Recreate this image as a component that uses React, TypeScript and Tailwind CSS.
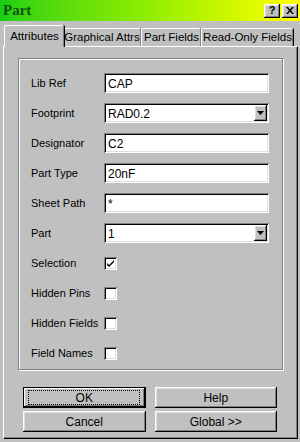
import React from "react";

const raised =
  "shadow-[inset_-1px_-1px_#000,inset_1px_1px_#fff,inset_-2px_-2px_#808080,inset_2px_2px_#dfdfdf]";
const sunken =
  "shadow-[inset_1px_1px_#808080,inset_-1px_-1px_#fff,inset_2px_2px_#000,inset_-2px_-2px_#dfdfdf]";

function TextRow({ label, value, combo }: { label: string; value: string; combo?: boolean }) {
  return (
    <div className="flex h-[30px] items-center">
      <div className="w-[73px] whitespace-nowrap">{label}</div>
      <div className={`relative flex h-[20px] w-[165px] items-center bg-white pl-[4px] pt-[1px] ${sunken}`}>
        <span className="text-[12px]">{value}</span>
        {combo && (
          <div
            className={`absolute right-[2px] top-[2px] flex h-[16px] w-[13px] items-center justify-center bg-[#c0c0c0] ${raised}`}
          >
            <svg width="7" height="4" viewBox="0 0 7 4">
              <path d="M0 0h7L3.5 4z" fill="#000" />
            </svg>
          </div>
        )}
      </div>
    </div>
  );
}

function CheckRow({ label, checked }: { label: string; checked?: boolean }) {
  return (
    <div className="flex h-[30px] items-center">
      <div className="w-[73px] whitespace-nowrap">{label}</div>
      <div className={`flex h-[13px] w-[13px] items-center justify-center bg-white ${sunken}`}>
        {checked && (
          <svg width="9" height="9" viewBox="0 0 9 9">
            <path d="M1 4l2 2 5-5v2l-5 5-2-2z" fill="#000" />
          </svg>
        )}
      </div>
    </div>
  );
}

function Tab({ label, width, active }: { label: string; width: string; active?: boolean }) {
  return (
    <div
      className={`relative flex items-center justify-center whitespace-nowrap rounded-t-[2px] border-l border-t border-white shadow-[inset_-1px_0_#808080,1px_0_#000] ${width} ${
        active ? "z-10 -mr-[2px] mb-[-1px] h-[22px] bg-[#c0c0c0]" : "mt-[2px] h-[18px]"
      }`}
    >
      {label}
    </div>
  );
}

export default function App() {
  return (
    <div
      className="h-[442px] w-[300px] overflow-hidden bg-[#c0c0c0] text-[11px] text-black"
      style={{ fontFamily: '"Liberation Sans", Arial, sans-serif' }}
    >
      {/* title bar */}
      <div className="flex h-[21px] items-center bg-gradient-to-r from-[#10d010] via-[#90ee00] to-[#ffff00] pl-[3px] pr-[2px]">
        <span
          className="flex-1 text-[15px] font-bold text-[#105010]"
          style={{ fontFamily: '"Liberation Serif", serif' }}
        >
          Part
        </span>
        <div className={`flex h-[14px] w-[16px] items-center justify-center bg-[#c0c0c0] text-[11px] font-bold ${raised}`}>
          ?
        </div>
        <div className={`ml-[2px] flex h-[14px] w-[16px] items-center justify-center bg-[#c0c0c0] ${raised}`}>
          <svg width="8" height="7" viewBox="0 0 8 7">
            <path d="M0 0h2l2 2.5L6 0h2L5 3.5 8 7H6L4 4.5 2 7H0l3-3.5z" fill="#000" />
          </svg>
        </div>
      </div>

      <div className="px-[3px] pt-[3px]">
        {/* tabs */}
        <div className="flex h-[22px] items-end pl-[1px] text-[11.5px]">
          <Tab label="Attributes" width="w-[60px]" active />
          <Tab label="Graphical Attrs" width="w-[79px]" />
          <Tab label="Part Fields" width="w-[60px]" />
          <Tab label="Read-Only Fields" width="w-[92px]" />
        </div>

        {/* panel */}
        <div className="h-[392px] w-[294px] border-l border-t border-white px-[14px] pt-[11px] shadow-[inset_-1px_-1px_#808080,1px_1px_#000]">
          <div className="h-[312px] border border-[#808080] pl-[12px] pt-[9px] shadow-[1px_1px_#fff,inset_1px_1px_#fff]">
            <TextRow label="Lib Ref" value="CAP" />
            <TextRow label="Footprint" value="RAD0.2" combo />
            <TextRow label="Designator" value="C2" />
            <TextRow label="Part Type" value="20nF" />
            <TextRow label="Sheet Path" value="*" />
            <TextRow label="Part" value="1" combo />
            <CheckRow label="Selection" checked />
            <CheckRow label="Hidden Pins" />
            <CheckRow label="Hidden Fields" />
            <CheckRow label="Field Names" />
          </div>

          {/* buttons */}
          <div className="mt-[17px] grid grid-cols-2 gap-x-[9px] gap-y-[3px] pl-[5px] pr-[6px] text-[12px]">
            <div className="flex h-[21px] items-center justify-center border border-black bg-[#c0c0c0] shadow-[inset_-1px_-1px_#000,inset_1px_1px_#fff,inset_-2px_-2px_#808080]">
              <span className="flex h-[13px] w-[110px] items-center justify-center outline outline-1 outline-dotted outline-black">
                OK
              </span>
            </div>
            <div className={`flex h-[21px] items-center justify-center ${raised}`}>Help</div>
            <div className={`flex h-[21px] items-center justify-center ${raised}`}>Cancel</div>
            <div className={`flex h-[21px] items-center justify-center ${raised}`}>Global &gt;&gt;</div>
          </div>
        </div>
      </div>
    </div>
  );
}
